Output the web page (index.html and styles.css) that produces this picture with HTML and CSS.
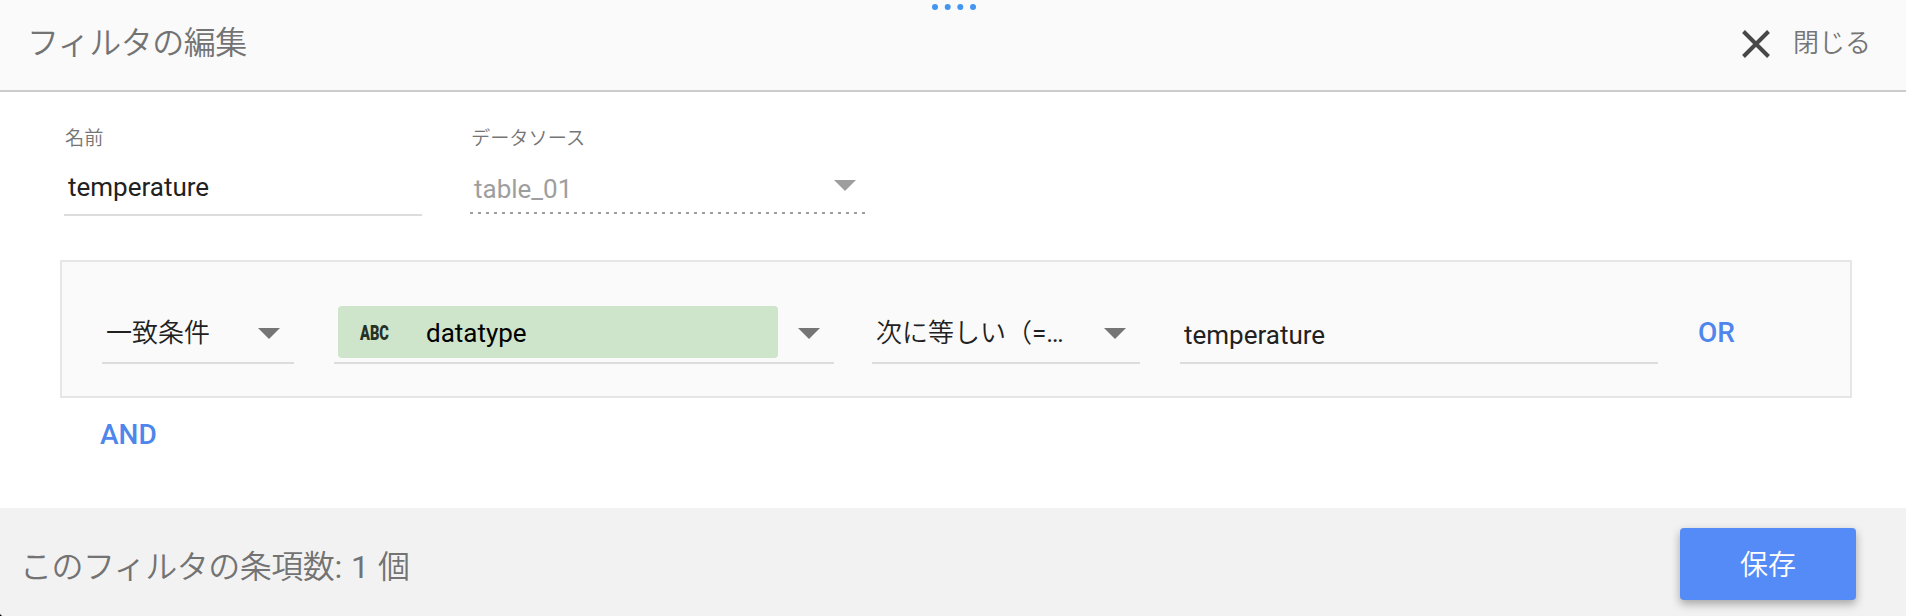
FILE: index.html
```
<!DOCTYPE html>
<html lang="ja">
<head>
    <meta charset="UTF-8">
    <meta name="viewport" content="width=device-width, initial-scale=1.0">
    <title>フィルタの編集</title>
    <link rel="stylesheet" href="styles.css">
</head>
<body>
    <div class="panel">
        <header class="header">
            <h1 class="title">フィルタの編集</h1>
            <button class="close">
                <svg class="close-icon" width="28" height="28" viewBox="0 0 28 28">
                    <path d="M1.5 1.5L26.5 26.5M26.5 1.5L1.5 26.5" stroke="#484848" stroke-width="4" fill="none"/>
                </svg>
                <span>閉じる</span>
            </button>
            <svg class="drag-handle" width="46" height="8" viewBox="0 0 46 8" fill="#4395ef">
                <circle cx="4" cy="4" r="3"/>
                <circle cx="16.7" cy="4" r="3"/>
                <circle cx="29.3" cy="4" r="3"/>
                <circle cx="42" cy="4" r="3"/>
            </svg>
        </header>

        <main class="content">
            <div class="fields">
                <div class="field name-field">
                    <label for="name">名前</label>
                    <input type="text" id="name" class="text-input" value="temperature">
                </div>
                <div class="field source-field">
                    <label>データソース</label>
                    <div class="select disabled">
                        <span>table_01</span>
                        <i class="arrow"></i>
                    </div>
                </div>
            </div>

            <div class="clause">
                <div class="select match">
                    <span>一致条件</span>
                    <i class="arrow"></i>
                </div>
                <div class="select dimension">
                    <div class="chip">
                        <span class="chip-type"><b>ABC</b></span>
                        <span class="chip-name">datatype</span>
                    </div>
                    <i class="arrow"></i>
                </div>
                <div class="select operator">
                    <span>次に等しい（<span class="latin">=…</span></span>
                    <i class="arrow"></i>
                </div>
                <input type="text" class="text-input value" value="temperature">
                <button class="link or">OR</button>
            </div>
            <button class="link and">AND</button>
        </main>

        <footer class="footer">
            <span class="count">このフィルタの条項数<span class="latin">: 1 </span>個</span>
            <button class="save">保存</button>
        </footer>
    </div>
</body>
</html>
```
FILE: styles.css
```
* {
    box-sizing: border-box;
}
body {
    margin: 0;
    font-family: Roboto, "Noto Sans CJK JP", sans-serif;
    font-size: 26px;
    color: #212121;
    background: #000;
}
button, input {
    font-family: inherit;
    font-size: inherit;
    color: inherit;
    border: none;
    background: none;
    padding: 0;
}
button {
    cursor: pointer;
}
.panel {
    height: 616px;
    display: flex;
    flex-direction: column;
    background: #fff;
    border-bottom-left-radius: 4px;
    overflow: hidden;
}
.latin {
    font-weight: 400;
}
.header {
    position: relative;
    height: 92px;
    padding: 0 35px 0 27px;
    display: flex;
    justify-content: space-between;
    align-items: center;
    background: #fafafa;
    border-bottom: 2px solid #ccc;
}
.title {
    margin: 0 0 10px;
    font-size: 32px;
    font-weight: 350;
    letter-spacing: -0.5px;
    color: #737373;
}
.close {
    display: flex;
    align-items: center;
    gap: 23px;
    margin-bottom: 2px;
    font-weight: 350;
    color: #757575;
}
.close span {
    margin-bottom: 7px;
}
.drag-handle {
    position: absolute;
    top: 3px;
    left: 931px;
}
.content {
    flex: 1;
    padding: 32px 54px 0 60px;
}
.fields {
    display: flex;
    gap: 48px;
    padding-left: 4px;
    height: 136px;
}
.field label {
    display: block;
    height: 28px;
    padding-left: 1px;
    line-height: 30px;
    font-size: 19.2px;
    font-weight: 350;
    color: #757575;
}
.name-field {
    width: 358px;
}
.source-field {
    width: 396px;
}
.text-input {
    width: 100%;
    padding-left: 4px;
    border-bottom: 2px solid #dcdcdc;
    outline: none;
}
.name-field .text-input {
    height: 64px;
    padding-top: 8px;
}
.select {
    display: flex;
    justify-content: space-between;
    align-items: center;
    height: 58px;
    padding: 0 14px 2px 4px;
    border-bottom: 2px solid #dcdcdc;
}
.arrow {
    border: 11px solid transparent;
    border-top-color: #757575;
    border-bottom: none;
}
.disabled {
    height: 62px;
    padding: 12px 10px 0 4px;
    color: #9e9e9e;
    border: none;
    background: repeating-linear-gradient(to right, #9e9e9e 0 3px, transparent 3px 8px) bottom / 100% 2px no-repeat;
}
.disabled .arrow {
    border-top-color: #9e9e9e;
    margin-bottom: 8px;
}
.clause {
    display: flex;
    height: 138px;
    padding: 44px 0 0 40px;
    background: #fafafa;
    border: 2px solid #e6e6e6;
}
.match {
    width: 192px;
    margin-right: 40px;
    font-weight: 350;
}
.dimension {
    width: 500px;
    margin-right: 38px;
}
.operator {
    width: 268px;
    margin-right: 40px;
    font-weight: 350;
}
.match > span, .operator > span {
    margin-bottom: 6px;
}
.chip {
    width: 440px;
    height: 52px;
    margin-bottom: 2px;
    display: flex;
    align-items: center;
    border-radius: 4px;
    background: #cee5cb;
    color: #000;
}
.chip-type {
    width: 88px;
    padding: 2px 0 0 22px;
    font-size: 20px;
    color: #263126;
}
.chip-type b {
    display: inline-block;
    font-weight: 900;
    transform: scaleX(0.73);
    transform-origin: left;
}
.chip-name {
    padding-top: 2px;
}
.value {
    width: 478px;
    height: 58px;
    padding-top: 2px;
}
.link {
    font-size: 28px;
    font-weight: 500;
    color: #4f86ec;
}
.or {
    height: 52px;
    margin-left: 40px;
}
.and {
    margin: 20px 0 0 40px;
}
.footer {
    height: 108px;
    padding: 0 50px 0 20px;
    display: flex;
    justify-content: space-between;
    align-items: center;
    background: #f2f2f2;
}
.count {
    margin-top: 3px;
    font-size: 32px;
    font-weight: 350;
    letter-spacing: -0.5px;
    word-spacing: 2px;
    color: #737373;
}
.save {
    width: 176px;
    height: 72px;
    margin-top: 4px;
    padding-bottom: 3px;
    border-radius: 4px;
    font-size: 28px;
    font-weight: 350;
    color: #fff;
    background: #558bf7;
    box-shadow: 0 4px 10px rgba(0, 0, 0, 0.32);
}
```
